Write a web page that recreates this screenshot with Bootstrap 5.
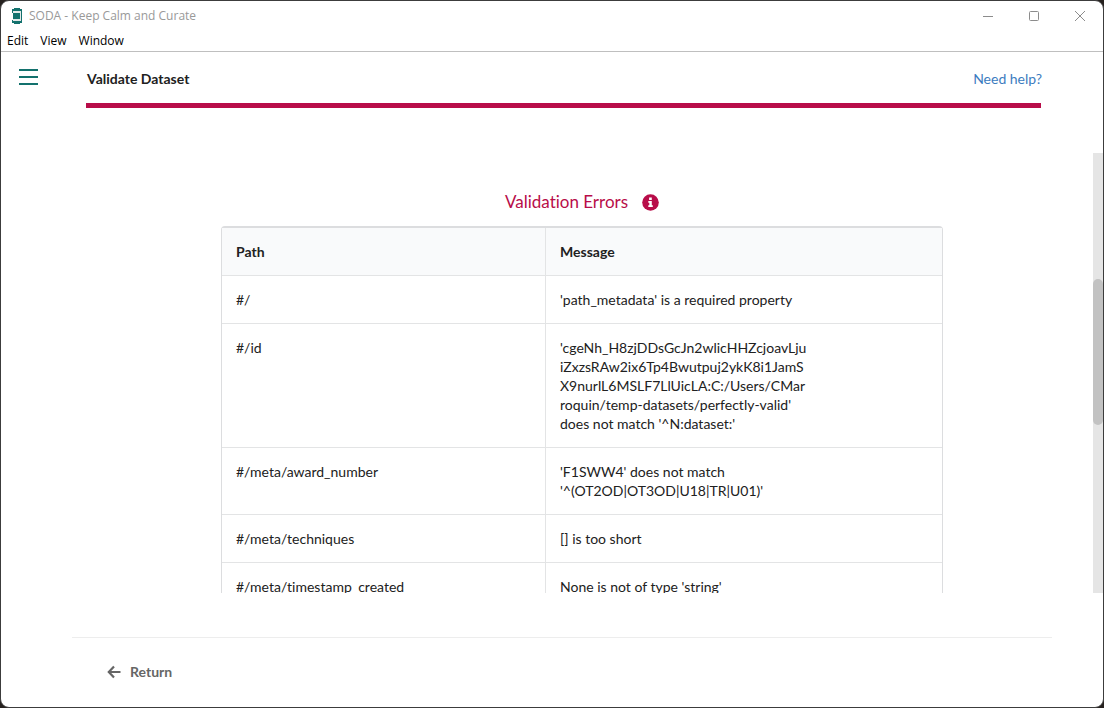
<!DOCTYPE html>
<html lang="en">
<head>
<meta charset="utf-8">
<meta name="viewport" content="width=device-width, initial-scale=1">
<title>SODA - Keep Calm and Curate</title>
<link href="https://cdn.jsdelivr.net/npm/bootstrap@5.3.0/dist/css/bootstrap.min.css" rel="stylesheet">
<style>
  :root { --soda-red: #b80d49; --soda-green: #13716d; --cell-line: #e3e4e5; }
  body { background: #26211f; font: 14px/19px Lato, "Liberation Sans", sans-serif; font-variant-ligatures: none; color: #212121; }
  button { line-height: inherit; }
  .app-window { border: 1px solid #3c3c3c; border-radius: 9px; }
  .title-bar { height: 29px; font: 12px/16px "Open Sans", "Noto Sans", sans-serif; color: #999; padding-left: 10px; }
  .title-text { margin-left: 6px; }
  .win-btn { width: 46px; height: 28px; color: #8c8c8c; }
  .menu-bar { height: 22px; border-bottom: 1px solid #bfbfbf; font: 12px/20px "Open Sans", "Noto Sans", sans-serif; padding-left: 6px; gap: 12px; }
  .menu-bar button { color: #000; }
  .page-head { height: 51px; padding: 2px 61px 0 18px; }
  .page-title { font-size: 14px; line-height: 19px; font-weight: 700; margin-left: 49px; }
  .help-link { color: #3c7cc0; }
  .red-rule { height: 5px; background: var(--soda-red); margin: 0 62px 45px 85px; }
  .scroll-area { margin-left: 70px; }
  .scroll-body { padding: 38px 150px 0; }
  .errors-title { font-size: 17px; line-height: 22px; font-weight: 400; color: var(--soda-red); margin-bottom: 13px; gap: 14px; }
  .errors-table { border: 1px solid #dcdddf; border-top-width: 2px; border-radius: 4px 4px 0 0; border-collapse: separate; border-spacing: 0; }
  .errors-table th, .errors-table td { padding: 14px; border-bottom: 1px solid var(--cell-line); vertical-align: top; }
  .errors-table th { background: #f9fafb; font-weight: 700; }
  .errors-table th:first-child, .errors-table td:first-child { width: 45%; border-right: 1px solid var(--cell-line); }
  .scroll-track { width: 10px; background: #e5e5e5; }
  .scroll-gap { height: calc(2 / 7 * 100%); }
  .scroll-thumb { height: calc(1 / 3 * 100%); background: #c2c2c2; border-radius: 5px; }
  .page-foot { margin: 44px 51px 0 71px; border-top: 1px solid #ededed; height: 70px; padding: 0 0 2px 35px; }
  .return-btn { color: #666; font-weight: 700; gap: 9px; }
</style>
</head>
<body>
<div class="app-window vh-100 d-flex flex-column bg-white overflow-hidden">
  <div class="title-bar d-flex align-items-center flex-shrink-0">
    <svg width="12" height="16" viewBox="0 0 12 16" aria-hidden="true">
      <path d="M3 0h6v1h2v4h-1v7h1v3H9v1H3v-1H1v-3h1V5H1V1h2z" fill="#13716d"/>
      <path d="M2 3h8v2H2zM2 11h8v2H2z" fill="#e3e8e8"/>
      <path d="M9 5h1v6H9z" fill="#e3e8e8"/>
      <path d="M10 3h1v10h-1zM1 3h1v2H1z" fill="#13716d"/>
    </svg>
    <span class="title-text">SODA - Keep Calm and Curate</span>
    <div class="d-flex ms-auto align-self-start">
      <button class="win-btn border-0 bg-transparent p-0" type="button" aria-label="Minimize"><svg width="12" height="12" viewBox="0 0 12 12" fill="none" stroke="currentColor"><path d="M1 6.500h10"/></svg></button>
      <button class="win-btn border-0 bg-transparent p-0" type="button" aria-label="Maximize"><svg width="12" height="12" viewBox="0 0 12 12" fill="none" stroke="currentColor"><rect x="1.500" y="1.500" width="9" height="9" rx="1"/></svg></button>
      <button class="win-btn border-0 bg-transparent p-0" type="button" aria-label="Close"><svg width="12" height="12" viewBox="0 0 12 12" fill="none" stroke="currentColor"><path d="M1 1l10 10M11 1L1 11"/></svg></button>
    </div>
  </div>
  <nav class="menu-bar d-flex flex-shrink-0" aria-label="Application menu">
    <button class="border-0 bg-transparent p-0" type="button">Edit</button>
    <button class="border-0 bg-transparent p-0" type="button">View</button>
    <button class="border-0 bg-transparent p-0" type="button">Window</button>
  </nav>
  <header class="page-head d-flex align-items-center flex-shrink-0">
    <button class="border-0 bg-transparent p-0 d-flex" type="button" aria-label="Toggle sidebar"><svg width="19" height="20" viewBox="0 0 19 20" fill="#13716d"><path d="M0 0h19v2H0zM0 7h19v2H0zM0 14h19v2H0z"/></svg></button>
    <h1 class="page-title mb-0">Validate Dataset</h1>
    <a class="help-link ms-auto text-decoration-none" href="#help">Need help?</a>
  </header>
  <div class="red-rule flex-shrink-0"></div>
  <main class="scroll-area d-flex flex-fill overflow-hidden">
    <div class="scroll-body flex-fill overflow-hidden">
      <h2 class="errors-title d-flex justify-content-center align-items-center">Validation Errors
        <svg width="17" height="17" viewBox="0 0 17 17" aria-hidden="true"><circle cx="8.500" cy="8.500" r="8.300" fill="#b80d49"/><path d="M7.100 3.600h2.700v2.500H7.100zM6.300 7h3.500v4.300h1v1.700H6.300v-1.700h1V8.700h-1z" fill="#fff"/></svg>
      </h2>
      <table class="errors-table w-100">
        <thead><tr><th scope="col">Path</th><th scope="col">Message</th></tr></thead>
        <tbody>
          <tr><td>#/</td><td>'path_metadata' is a required property</td></tr>
          <tr><td>#/id</td><td>'cgeNh_H8zjDDsGcJn2wlicHHZcjoavLju<br>iZxzsRAw2ix6Tp4Bwutpuj2ykK8i1JamS<br>X9nurlL6MSLF7LlUicLA:C:/Users/CMar<br>roquin/temp-datasets/perfectly-valid'<br>does not match '^N:dataset:'</td></tr>
          <tr><td>#/meta/award_number</td><td>'F1SWW4' does not match<br>'^(OT2OD|OT3OD|U18|TR|U01)'</td></tr>
          <tr><td>#/meta/techniques</td><td>[] is too short</td></tr>
          <tr><td>#/meta/timestamp_created</td><td>None is not of type 'string'</td></tr>
        </tbody>
      </table>
    </div>
    <div class="scroll-track flex-shrink-0" aria-hidden="true"><div class="scroll-gap"></div><div class="scroll-thumb"></div></div>
  </main>
  <footer class="page-foot d-flex align-items-center flex-shrink-0">
    <button class="return-btn border-0 bg-transparent p-0 d-flex align-items-center" type="button">
      <svg width="14" height="14" viewBox="0 0 14 14" fill="none" stroke="currentColor" stroke-width="2.200" aria-hidden="true"><path d="M7 1.500L1.800 7 7 12.500M2 7h11.500"/></svg>
      Return
    </button>
  </footer>
</div>
<script src="https://cdn.jsdelivr.net/npm/bootstrap@5.3.0/dist/js/bootstrap.bundle.min.js"></script>
</body>
</html>
